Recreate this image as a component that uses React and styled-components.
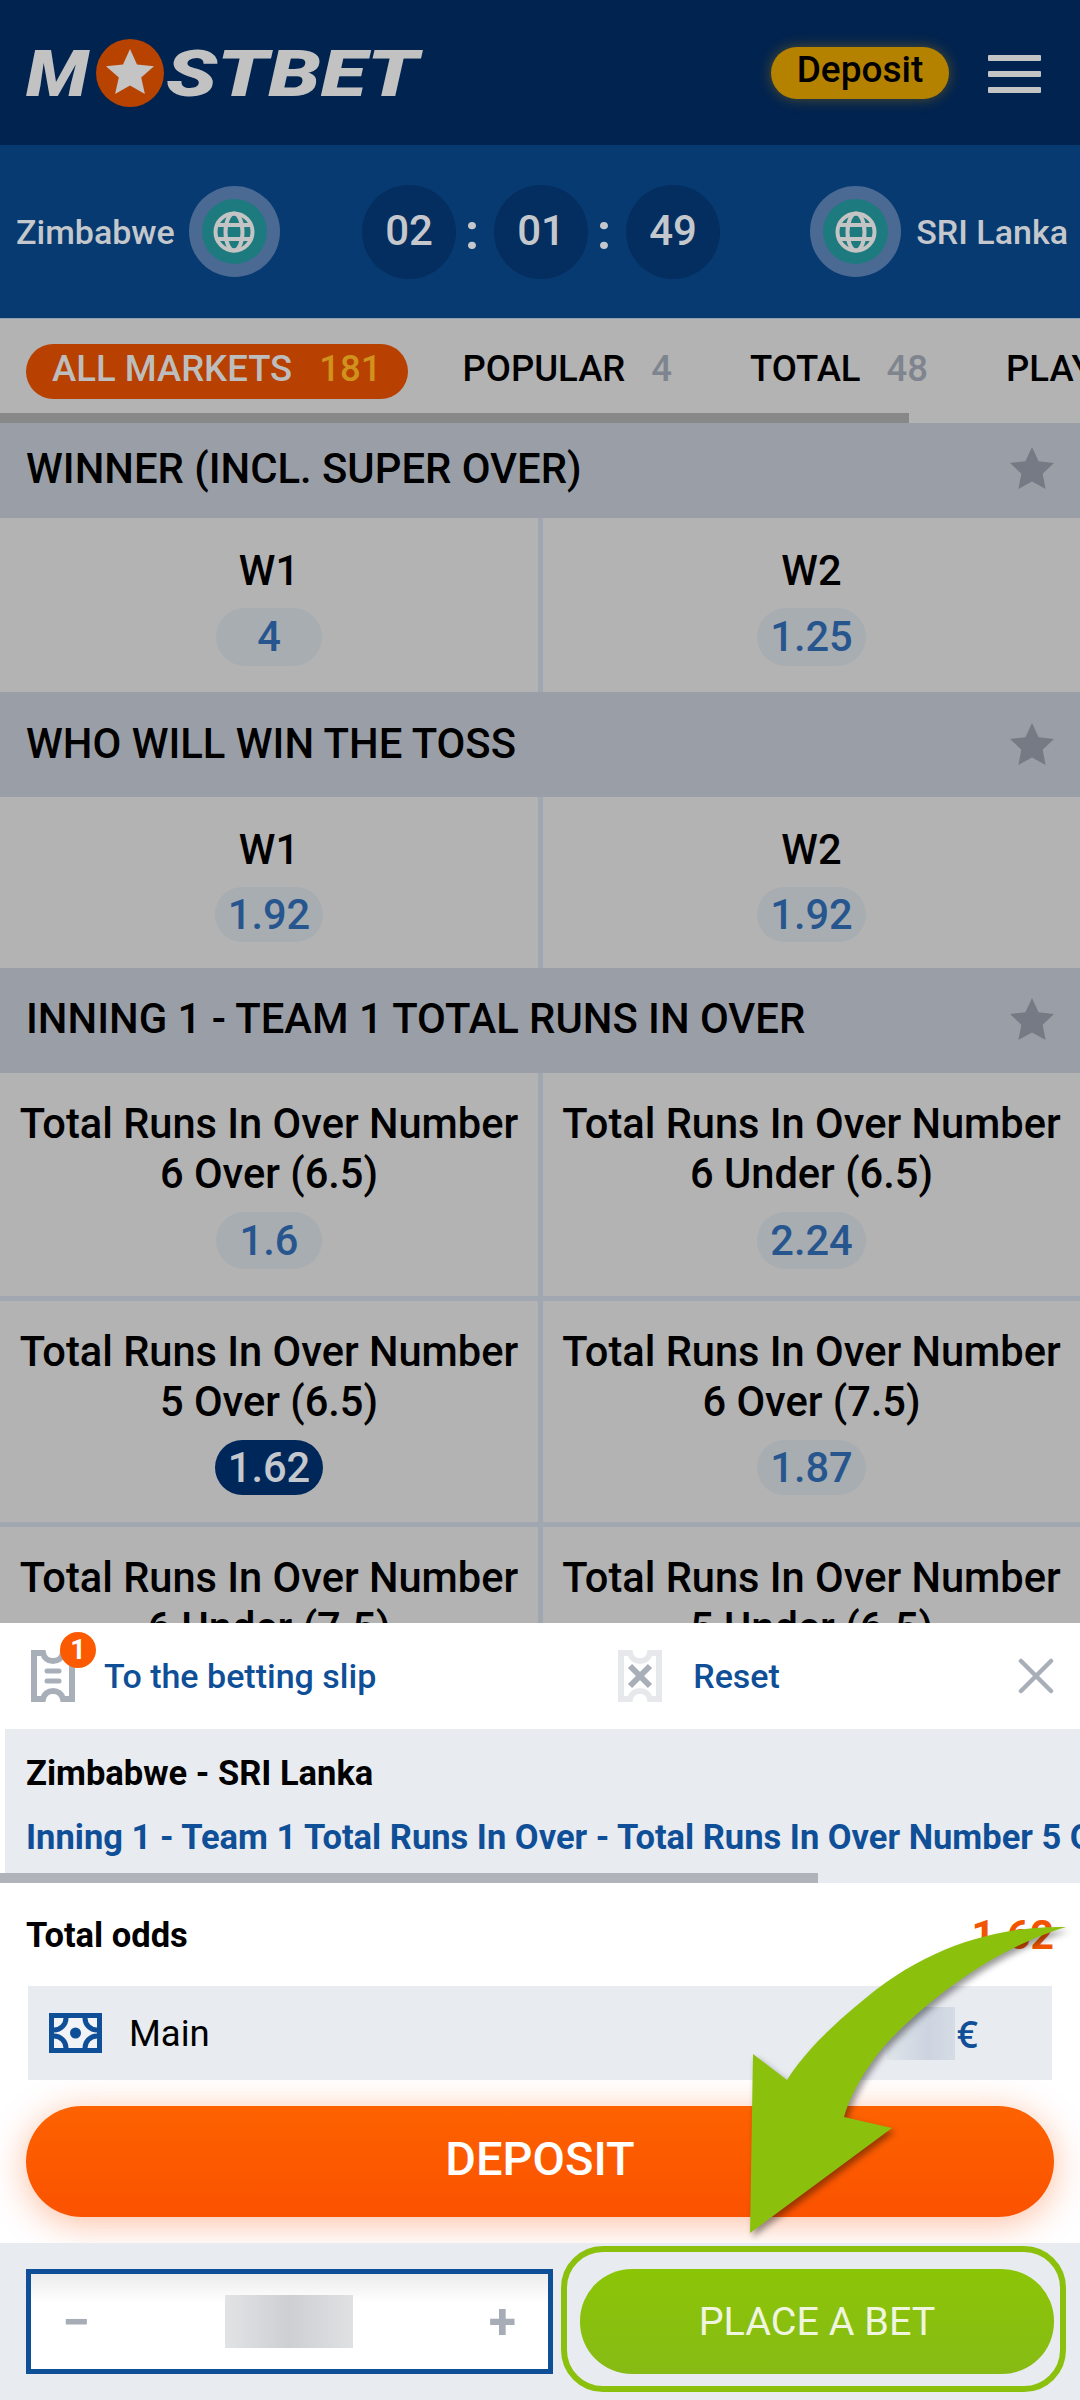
import React from 'react';
import styled, { createGlobalStyle } from 'styled-components';

const GlobalStyle = createGlobalStyle`
  html, body {
    margin: 0;
    padding: 0;
    background: #fff;
  }
  * {
    box-sizing: border-box;
  }
`;

const Page = styled.div`
  position: relative;
  width: 1080px;
  height: 2400px;
  overflow: hidden;
  display: flex;
  flex-direction: column;
  font-family: Roboto, "Liberation Sans", sans-serif;
`;

const TopBar = styled.header`
  height: 145px;
  flex: none;
  background: #00234f;
  display: flex;
  align-items: center;
  padding: 0 39px 0 26px;
`;

const Logo = styled.div`
  display: flex;
  align-items: center;
  color: #c2c2c2;
  font-size: 65px;
  line-height: 70px;
  font-weight: 900;
  font-style: italic;
`;

const LogoLetters = styled.span`
  display: inline-block;
  margin-top: 3px;
  transform: scaleX(${props => props.$sx});
  transform-origin: left center;
`;

const LogoBall = styled.svg`
  width: 68px;
  height: 68px;
  margin: 0 2px 0 15px;
`;

const TopActions = styled.div`
  margin-left: auto;
  display: flex;
  align-items: center;
  gap: 39px;
`;

const DepositPill = styled.div`
  width: 178px;
  height: 52px;
  border-radius: 26px;
  background: #b58200;
  box-shadow: 0 0 14px rgba(181, 130, 0, 0.45);
  color: #000;
  font-size: 37px;
  font-weight: 500;
  line-height: 46px;
  text-align: center;
`;

const Burger = styled.div`
  width: 53px;
  margin-top: 2px;
  display: flex;
  flex-direction: column;
  gap: 10px;
  span {
    display: block;
    height: 6px;
    border-radius: 1px;
    background: #c4c4c4;
  }
`;

const MatchBar = styled.section`
  height: 173px;
  flex: none;
  background: #063a70;
  display: flex;
  align-items: center;
  justify-content: space-between;
  padding: 0 12px 0 16px;
  color: #c4c8cc;
`;

const Team = styled.div`
  display: flex;
  align-items: center;
  gap: ${props => props.$gap}px;
  font-size: 34px;
  font-weight: 500;
`;

const TeamBadge = styled.div`
  width: 91px;
  height: 91px;
  border-radius: 50%;
  background: #4a6a94;
  display: flex;
  align-items: center;
  justify-content: center;
`;

const TeamBadgeInner = styled.div`
  width: 65px;
  height: 65px;
  border-radius: 50%;
  background: #1d7a7e;
  display: flex;
  align-items: center;
  justify-content: center;
`;

const Timer = styled.div`
  display: flex;
  align-items: center;
  gap: 12px;
  margin-left: -8px;
`;

const TimerCell = styled.div`
  width: 94px;
  height: 94px;
  border-radius: 50%;
  background: #042d60;
  font-size: 42px;
  font-weight: 500;
  line-height: 92px;
  text-align: center;
`;

const TimerColon = styled.div`
  width: 14px;
  margin: 0 3px 0 -3px;
  font-size: 50px;
  font-weight: 700;
  line-height: 40px;
  text-align: center;
`;

const Tabs = styled.nav`
  position: relative;
  height: 105px;
  flex: none;
  background: #b3b3b3;
  border-top: 1px solid #8fa0b5;
  display: flex;
  padding: 25px 0 0 26px;
  overflow: hidden;
  white-space: nowrap;
`;

const Tab = styled.div`
  height: 55px;
  flex: none;
  display: flex;
  align-items: center;
  gap: ${props => (props.$active ? 27 : 26)}px;
  border-radius: 28px;
  padding: ${props => (props.$active ? '0 27px 6px 26px' : '0 0 6px')};
  margin-right: ${props => props.$gap}px;
  background: ${props => (props.$active ? '#b84000' : 'transparent')};
  color: ${props => (props.$active ? '#bdbdbd' : '#000')};
  font-size: 36.5px;
  font-weight: 500;
`;

const TabCount = styled.span`
  color: ${props => (props.$active ? '#d0921c' : '#7f858e')};
`;

const TabScroll = styled.div`
  position: absolute;
  left: 0;
  bottom: 0;
  width: 909px;
  height: 10px;
  background: #888;
`;

const Markets = styled.main`
  flex: 1;
  min-height: 0;
  overflow: hidden;
  background: #a0a7b0;
`;

const MarketTitle = styled.div`
  height: ${props => props.$h}px;
  display: flex;
  align-items: center;
  justify-content: space-between;
  padding: 0 26px ${props => props.$pb}px;
  background: #9a9fa7;
  color: #000;
  font-size: 41.8px;
  font-weight: 500;
`;

const OddsRow = styled.div`
  display: grid;
  grid-template-columns: 538px 1fr;
  column-gap: 5px;
  margin-bottom: ${props => props.$mb}px;
`;

const OddsCell = styled.div`
  min-height: ${props => props.$h}px;
  background: #b3b3b3;
  display: flex;
  flex-direction: column;
  align-items: center;
  padding-top: ${props => props.$pt}px;
  color: #000;
  font-size: 41.6px;
  font-weight: 500;
  line-height: 50px;
  text-align: center;
`;

const OddsPill = styled.div`
  min-width: 106px;
  height: ${props => props.$h}px;
  margin-top: ${props => props.$mt}px;
  padding: 0 13px;
  border-radius: 29px;
  background: ${props => (props.$on ? '#00275a' : '#a8adb2')};
  color: ${props => (props.$on ? '#c4c8cc' : '#27568e')};
  line-height: ${props => props.$h}px;
`;

const Slip = styled.section`
  height: 777px;
  flex: none;
  background: #fff;
  display: flex;
  flex-direction: column;
`;

const SlipHead = styled.div`
  height: 106px;
  flex: none;
  display: flex;
  align-items: center;
  padding: 0 26px 0 31px;
  color: #0f4f98;
  font-size: 34px;
  font-weight: 500;
`;

const SlipLink = styled.div`
  position: relative;
  display: flex;
  align-items: center;
  gap: ${props => props.$gap}px;
  margin-right: ${props => props.$mr};
`;

const CountBadge = styled.div`
  position: absolute;
  left: 29px;
  top: -18px;
  width: 36px;
  height: 36px;
  border-radius: 50%;
  background: #fb5a00;
  color: #fff;
  font-size: 27px;
  font-weight: 700;
  line-height: 36px;
  text-align: center;
`;

const CloseBtn = styled.div`
  margin-left: auto;
  display: flex;
`;

const BetInfo = styled.div`
  position: relative;
  height: 154px;
  flex: none;
  margin-left: 5px;
  padding: 22px 0 0 21px;
  background: #e8ebf0;
  white-space: nowrap;
`;

const BetMatch = styled.div`
  color: #000;
  font-size: 34.5px;
  font-weight: 700;
  line-height: 44px;
`;

const BetName = styled.div`
  margin-top: 20px;
  color: #0f4f98;
  font-size: 34.5px;
  font-weight: 700;
  line-height: 44px;
`;

const BetScroll = styled.div`
  position: absolute;
  left: -5px;
  bottom: 0;
  width: 818px;
  height: 10px;
  background: #b0b3b9;
`;

const TotalRow = styled.div`
  height: 103px;
  flex: none;
  display: flex;
  align-items: center;
  justify-content: space-between;
  padding: 0 26px;
  font-size: 34.5px;
  font-weight: 700;
  color: #000;
  span {
    color: #f25500;
    font-size: 41px;
  }
`;

const Account = styled.div`
  position: relative;
  z-index: 1;
  height: 94px;
  flex: none;
  margin: 0 28px;
  background: #e8ebf0;
  display: flex;
  align-items: center;
  padding: 0 74px 0 21px;
  color: #000;
  font-size: 36.5px;
`;

const AccountName = styled.span`
  margin-left: 27px;
`;

const BlurValue = styled.div`
  width: 68px;
  height: 53px;
  margin-left: auto;
  background: linear-gradient(90deg, #dfe4ea, #ccd4e0 60%, #d6dce5);
`;

const Euro = styled.span`
  margin-left: 2px;
  color: #0f4f98;
  font-size: 37px;
  font-family: "Open Sans", Roboto, sans-serif;
  font-weight: 600;
`;

const DepositWrap = styled.div`
  flex: 1;
  min-height: 0;
  background: #fff;
  padding: 26px 26px 0;
`;

const DepositButton = styled.div`
  height: 111px;
  border-radius: 56px;
  background: linear-gradient(180deg, #fd6200, #fb5200);
  box-shadow: 0 6px 36px rgba(251, 82, 0, 0.38);
  color: #fff;
  font-size: 47px;
  font-weight: 500;
  line-height: 105px;
  text-align: center;
`;

const BetBar = styled.div`
  position: relative;
  height: 157px;
  flex: none;
  background: #e8ebf0;
  display: flex;
  gap: 27px;
  padding: 26px 26px 0;
`;

const StakeBox = styled.div`
  width: 527px;
  height: 105px;
  border: 5px solid #0f4f98;
  background: linear-gradient(180deg, #ececec, #fff 30%);
  display: flex;
  align-items: center;
  justify-content: space-between;
  padding: 0 32px 0 31px;
  color: #a7adb7;
  font-size: 50px;
  font-weight: 700;
`;

const StakeBlur = styled.div`
  width: 128px;
  height: 53px;
  background: linear-gradient(90deg, #e2e3e5, #cdcfd2 50%, #e0e1e3);
`;

const BetButton = styled.div`
  flex: 1;
  height: 105px;
  border-radius: 52px;
  background: linear-gradient(180deg, #8bc507, #87bb15);
  color: #f0f5e0;
  font-size: 39.5px;
  line-height: 105px;
  text-align: center;
`;

const BetOutline = styled.div`
  position: absolute;
  left: 561px;
  top: 3px;
  width: 505px;
  height: 146px;
  border: 6px solid #8bc10d;
  border-radius: 42px;
`;

const Arrow = styled.svg`
  position: absolute;
  z-index: 2;
  left: 740px;
  top: 1915px;
  width: 340px;
  height: 330px;
  filter: drop-shadow(3px 4px 3px rgba(0, 0, 0, 0.4));
`;

const Globe = () => (
  <svg width="42" height="42" viewBox="0 0 42 42" fill="none" stroke="#c4c4c4" strokeWidth="4">
    <circle cx="21" cy="21" r="18.5" />
    <ellipse cx="21" cy="21" rx="8.5" ry="18.5" />
    <path d="M4 14h34M4 28h34" />
  </svg>
);

const Star = () => (
  <svg width="44" height="42" viewBox="0 0 44 42">
    <path fill="#757a85" d="M22 0l6.6 14.2 15.4 1.9-11.3 10.6 2.9 15.3L22 34.5 8.4 42l2.9-15.3L0 16.1l15.4-1.9z" />
  </svg>
);

const ticketPath = 'M3 3h9c1 5 5 8 10 8s9-3 10-8h9v46h-9c-1-5-5-8-10-8s-9 3-10 8H3z';

const OVER = 'Total Runs In Over Number';

const markets = [
  {
    title: 'WINNER (INCL. SUPER OVER)',
    h: 95,
    pb: 5,
    rows: [
      { h: 174, pill: 58, pt: 28, mt: 12, cells: [{ label: ['W1'], odds: '4' }, { label: ['W2'], odds: '1.25' }] },
    ],
  },
  {
    title: 'WHO WILL WIN THE TOSS',
    h: 105,
    pb: 2,
    rows: [
      { h: 171, pill: 55, pt: 28, mt: 12, cells: [{ label: ['W1'], odds: '1.92' }, { label: ['W2'], odds: '1.92' }] },
    ],
  },
  {
    title: 'INNING 1 - TEAM 1 TOTAL RUNS IN OVER',
    h: 105,
    pb: 4,
    rows: [
      { h: 223, pill: 57, pt: 26, mt: 13, mb: 5, cells: [
        { label: [OVER, '6 Over (6.5)'], odds: '1.6' },
        { label: [OVER, '6 Under (6.5)'], odds: '2.24' },
      ] },
      { h: 221, pill: 55, pt: 26, mt: 13, mb: 5, cells: [
        { label: [OVER, '5 Over (6.5)'], odds: '1.62', on: true },
        { label: [OVER, '6 Over (7.5)'], odds: '1.87' },
      ] },
      { h: 221, pill: 55, pt: 26, mt: 13, cells: [
        { label: [OVER, '6 Under (7.5)'] },
        { label: [OVER, '5 Under (6.5)'] },
      ] },
    ],
  },
];

const App = () => (
  <Page>
    <GlobalStyle />
    <TopBar>
      <Logo>
        <LogoLetters $sx={1.13}>M</LogoLetters>
        <LogoBall viewBox="0 0 68 68">
          <circle cx="34" cy="34" r="34" fill="#b84200" />
          <path fill="#c4c4c4" d="M34 10l7 15.5 17 1.7-12.8 11.3 3.7 16.6L34 46.6l-14.9 8.5 3.7-16.6L10 27.2l17-1.7z" />
        </LogoBall>
        <LogoLetters $sx={1.29}>STBET</LogoLetters>
      </Logo>
      <TopActions>
        <DepositPill>Deposit</DepositPill>
        <Burger><span /><span /><span /></Burger>
      </TopActions>
    </TopBar>

    <MatchBar>
      <Team $gap={14}>
        Zimbabwe
        <TeamBadge><TeamBadgeInner><Globe /></TeamBadgeInner></TeamBadge>
      </Team>
      <Timer>
        <TimerCell>02</TimerCell>
        <TimerColon>:</TimerColon>
        <TimerCell>01</TimerCell>
        <TimerColon>:</TimerColon>
        <TimerCell>49</TimerCell>
      </Timer>
      <Team $gap={15}>
        <TeamBadge><TeamBadgeInner><Globe /></TeamBadgeInner></TeamBadge>
        SRI Lanka
      </Team>
    </MatchBar>

    <Tabs>
      <Tab $active $gap={54}>ALL MARKETS <TabCount $active>181</TabCount></Tab>
      <Tab $gap={78}>POPULAR <TabCount>4</TabCount></Tab>
      <Tab $gap={78}>TOTAL <TabCount>48</TabCount></Tab>
      <Tab $gap={0}>PLAYER</Tab>
      <TabScroll />
    </Tabs>

    <Markets>
      {markets.map(m => (
        <React.Fragment key={m.title}>
          <MarketTitle $h={m.h} $pb={m.pb}>
            {m.title}
            <Star />
          </MarketTitle>
          {m.rows.map((row, r) => (
            <OddsRow key={r} $mb={row.mb || 0}>
              {row.cells.map((cell, i) => (
                <OddsCell key={i} $h={row.h} $pt={row.pt}>
                  {cell.label.map(line => <div key={line}>{line}</div>)}
                  {cell.odds && <OddsPill $h={row.pill} $mt={row.mt} $on={cell.on}>{cell.odds}</OddsPill>}
                </OddsCell>
              ))}
            </OddsRow>
          ))}
        </React.Fragment>
      ))}
    </Markets>

    <Slip>
      <SlipHead>
        <SlipLink $gap={29} $mr="242px">
          <svg width="44" height="52" viewBox="0 0 44 52" fill="none">
            <path stroke="#a9afb9" strokeWidth="6" d={ticketPath} />
            <path stroke="#a9afb9" strokeWidth="5" strokeLinecap="round" d="M16 21h12M16 31h12" />
          </svg>
          <CountBadge>1</CountBadge>
          To the betting slip
        </SlipLink>
        <SlipLink $gap={31} $mr="0">
          <svg width="44" height="52" viewBox="0 0 44 52" fill="none">
            <path stroke="#e6e8eb" strokeWidth="6" d={ticketPath} />
            <path stroke="#a9afb9" strokeWidth="6" d="M12 16l20 20M32 16L12 36" />
          </svg>
          Reset
        </SlipLink>
        <CloseBtn>
          <svg width="36" height="36" viewBox="0 0 36 36" stroke="#a9afb9" strokeWidth="4.5" strokeLinecap="round">
            <path d="M3 3l30 30M33 3L3 33" />
          </svg>
        </CloseBtn>
      </SlipHead>

      <BetInfo>
        <BetMatch>Zimbabwe - SRI Lanka</BetMatch>
        <BetName>Inning 1 - Team 1 Total Runs In Over - Total Runs In Over Number 5 Over (6.5)</BetName>
        <BetScroll />
      </BetInfo>

      <TotalRow>
        Total odds
        <span>1.62</span>
      </TotalRow>

      <Account>
        <svg width="53" height="40" viewBox="0 0 53 40" fill="none">
          <rect x="2.5" y="2.5" width="48" height="35" fill="#f1f3f6" stroke="#0f4f98" strokeWidth="5" />
          <path stroke="#0f4f98" strokeWidth="5" d="M5 17A12 12 0 0 0 17 5M36 5A12 12 0 0 0 48 17M48 23A12 12 0 0 0 36 35M17 35A12 12 0 0 0 5 23" />
          <circle cx="26.5" cy="20" r="5.5" fill="#0f4f98" />
        </svg>
        <AccountName>Main</AccountName>
        <BlurValue />
        <Euro>€</Euro>
      </Account>

      <DepositWrap>
        <DepositButton>DEPOSIT</DepositButton>
      </DepositWrap>

      <BetBar>
        <StakeBox>
          <span>−</span>
          <StakeBlur />
          <span>+</span>
        </StakeBox>
        <BetButton>PLACE A BET</BetButton>
        <BetOutline />
      </BetBar>
    </Slip>

    <Arrow viewBox="740 1915 340 330">
      <path
        fill="#8bc10d"
        d="M1066 1927C1000 1926 930 1945 867 1997C830 2027 805 2052 787 2080L753 2054L750 2233L892 2128L844 2117C852 2090 870 2062 887 2043C925 2003 990 1950 1066 1927Z"
      />
    </Arrow>
  </Page>
);

export default App;
